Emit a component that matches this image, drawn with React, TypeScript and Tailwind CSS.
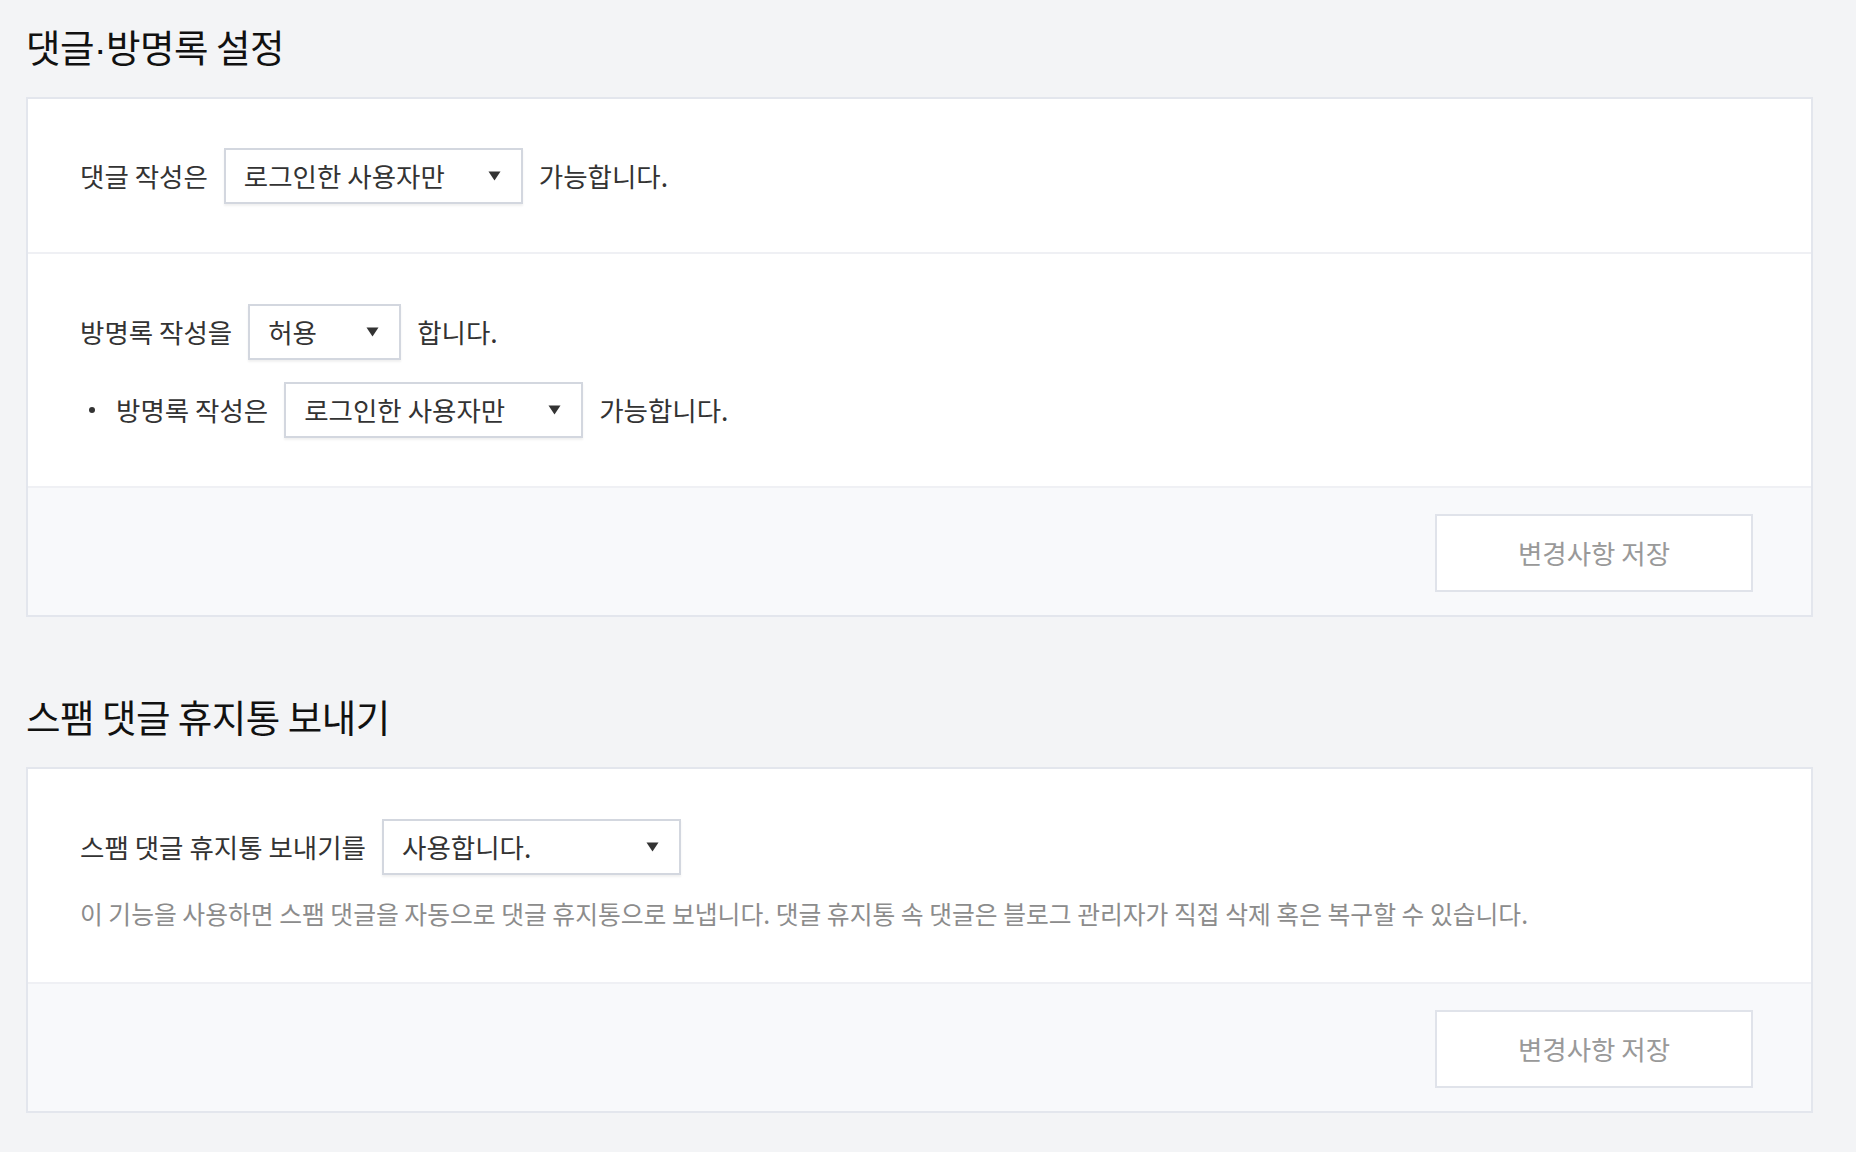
import { useState } from 'react';

const font = { fontFamily: '"Noto Sans CJK KR", "Noto Sans", sans-serif' };

type SelectProps = { value: string; width: string };

function FakeSelect({ value, width }: SelectProps) {
    return (
        <div
            className={`flex h-[56px] items-center justify-between border-2 border-[#d3d7df] bg-white pl-[18px] pr-[20px] text-[26.5px] text-[#333] shadow-[0_2px_2px_rgba(0,0,0,0.06)] ${width}`}
        >
            <span className="leading-none">{value}</span>
            <svg width="13" height="10" viewBox="0 0 13 10" className="shrink-0">
                <path d="M0.5 0.5 H12.5 L6.5 9.5 Z" fill="#333" />
            </svg>
        </div>
    );
}

function SaveButton() {
    return (
        <div className="flex justify-end bg-[#f8f9fb] pb-[23px] pr-[58px] pt-[26px]">
            <button className="h-[78px] w-[318px] border-2 border-[#e0e3ea] bg-white text-[26.5px] text-[#999]">
                변경사항 저장
            </button>
        </div>
    );
}

export default function App() {
    const [spam] = useState('사용합니다.');

    return (
        <div className="min-h-screen bg-[#f3f4f6] pb-[39px] pl-[26px] pr-[43px] pt-[26px]" style={font}>
            <h2 className="h-[40px] overflow-visible text-[37.5px] leading-[40px] font-normal tracking-[-0.5px] text-[#111]">
                댓글<span className="font-['Liberation_Sans'] leading-none">·</span>방명록 설정
            </h2>

            <section className="mt-[31px] border-2 border-[#e3e6ed] bg-white">
                <div className="flex items-center gap-[16px] border-b-2 border-[#eff0f4] pb-[48px] pl-[52px] pt-[49px] text-[26.5px] text-[#333]">
                    <span>댓글 작성은</span>
                    <FakeSelect value="로그인한 사용자만" width="w-[299px]" />
                    <span>가능합니다.</span>
                </div>

                <div className="flex flex-col gap-[22px] border-b-2 border-[#eff0f4] pb-[48px] pl-[52px] pt-[50px] text-[26.5px] text-[#333]">
                    <div className="flex items-center gap-[16px]">
                        <span>방명록 작성을</span>
                        <FakeSelect value="허용" width="w-[153px]" />
                        <span>합니다.</span>
                    </div>
                    <div className="flex items-center gap-[16px]">
                        <span className="flex items-center">
                            <span className="ml-[9px] mr-[21px] inline-block size-[6px] rounded-full bg-[#333]" />
                            방명록 작성은
                        </span>
                        <FakeSelect value="로그인한 사용자만" width="w-[299px]" />
                        <span>가능합니다.</span>
                    </div>
                </div>

                <SaveButton />
            </section>

            <h2 className="mt-[79px] h-[40px] text-[37.5px] leading-[40px] font-normal tracking-[-0.5px] text-[#111]">
                스팸 댓글 휴지통 보내기
            </h2>

            <section className="mt-[31px] border-2 border-[#e3e6ed] bg-white">
                <div className="border-b-2 border-[#eff0f4] pb-[53px] pl-[52px] pt-[50px]">
                    <div className="flex items-center gap-[16px] text-[26.5px] text-[#333]">
                        <span>스팸 댓글 휴지통 보내기를</span>
                        <FakeSelect value={spam} width="w-[299px]" />
                    </div>
                    <p className="mt-[22px] text-[24.8px] leading-[32px] text-[#8c8c8c]">
                        이 기능을 사용하면 스팸 댓글을 자동으로 댓글 휴지통으로 보냅니다. 댓글 휴지통 속 댓글은 블로그 관리자가 직접 삭제 혹은 복구할 수 있습니다.
                    </p>
                </div>

                <SaveButton />
            </section>
        </div>
    );
}
